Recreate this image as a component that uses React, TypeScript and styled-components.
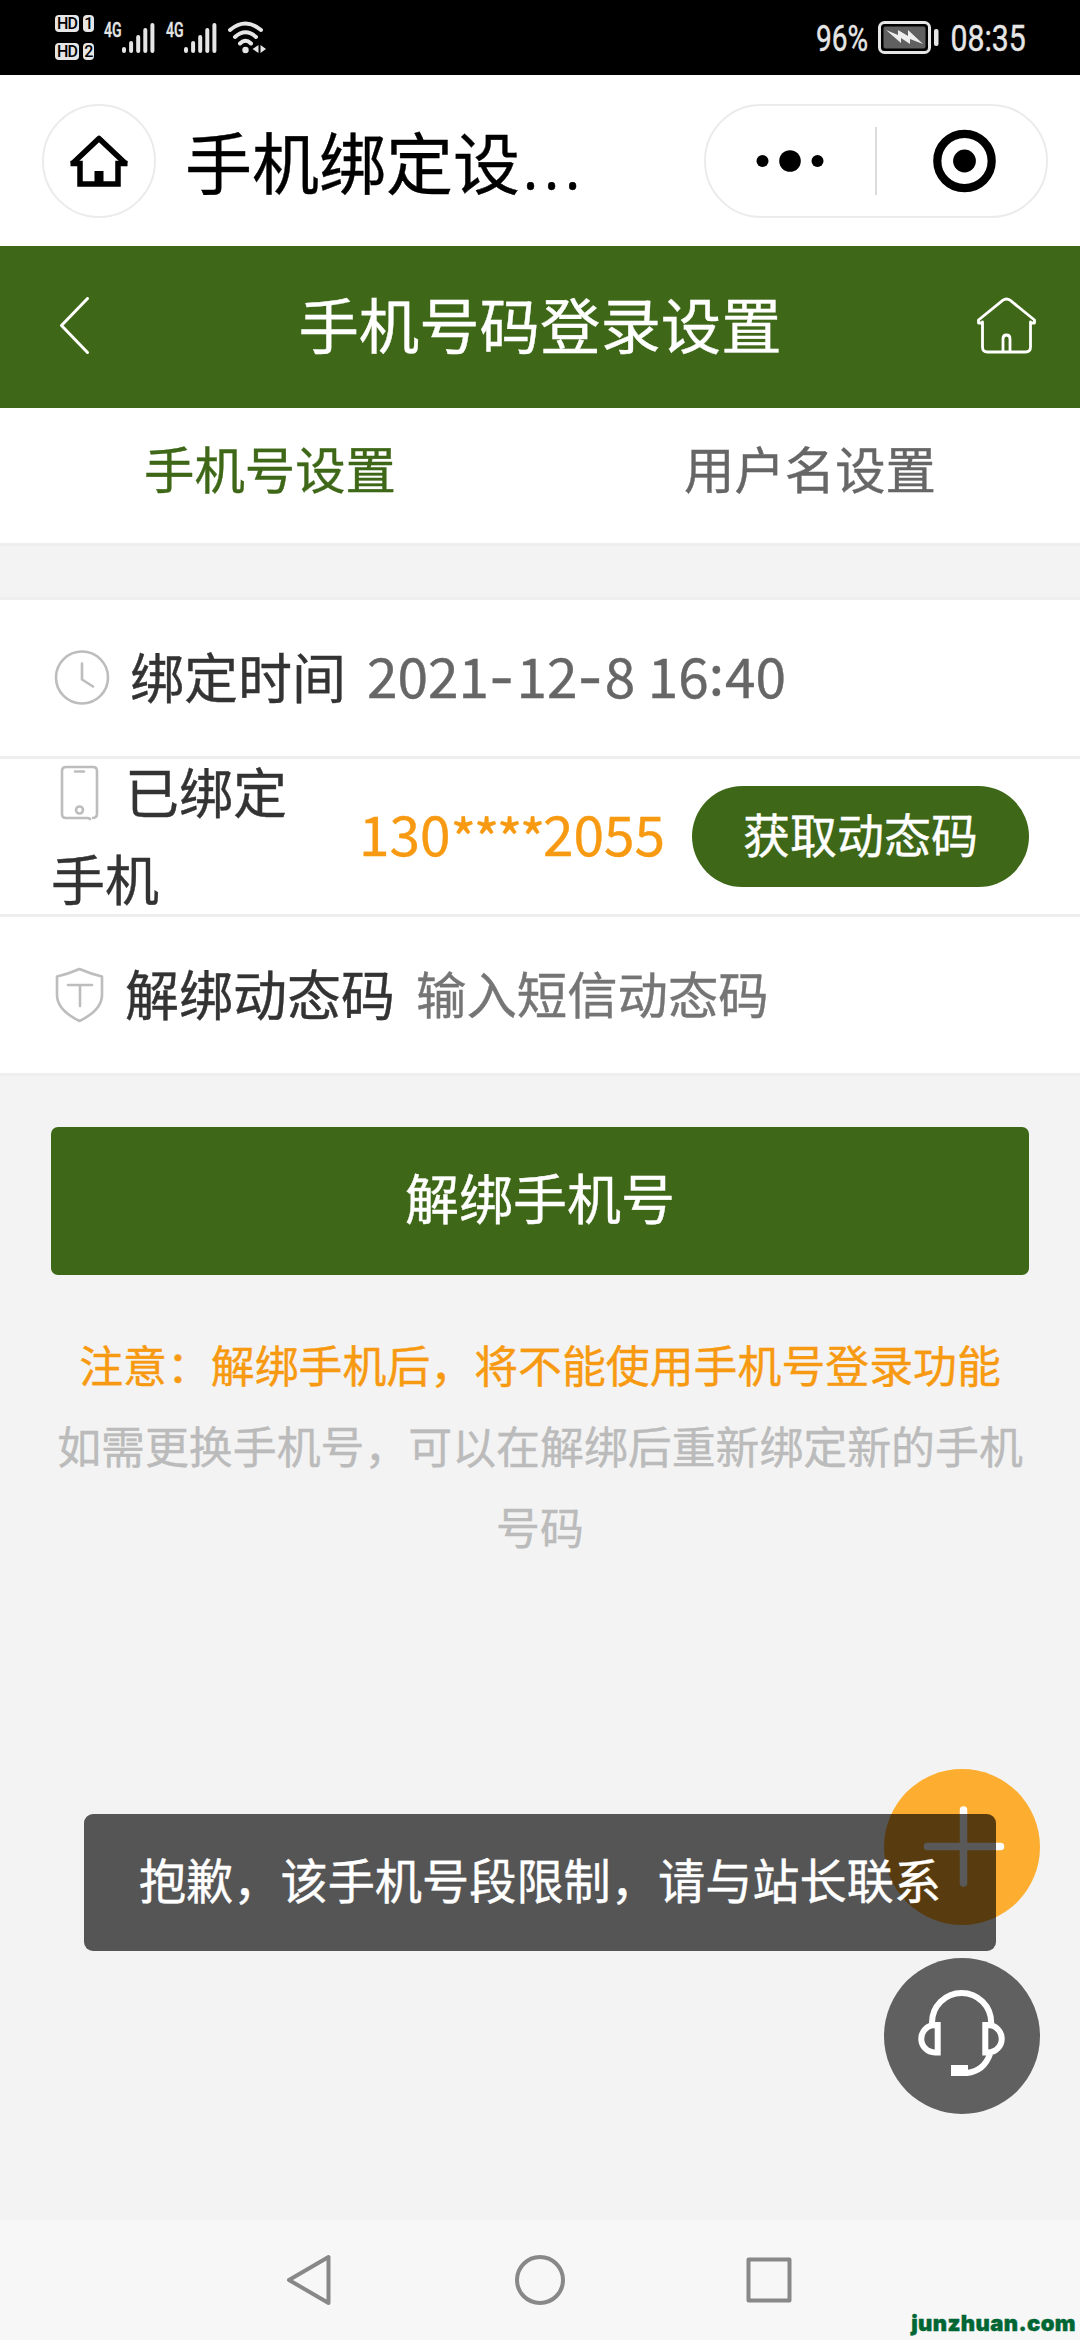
import React from "react";
import styled, { createGlobalStyle } from "styled-components";

const GREEN = "#3e6717";
const ORANGE = "#f79a11";

const GlobalStyle = createGlobalStyle`
  * { box-sizing: border-box; }
  body { margin: 0; background: #f3f3f3; }
  button, input { font-family: inherit; border: 0; padding: 0; background: none; }
`;

const Screen = styled.div`
  position: relative;
  width: 1080px;
  height: 2340px;
  overflow: hidden;
  display: flex;
  flex-direction: column;
  background: #f3f3f3;
  color: #333;
  font-family: "Noto Sans CJK SC", sans-serif;
  font-weight: 400;
  -webkit-text-stroke: 0.4px;
`;

const StatusBar = styled.header`
  height: 75px;
  flex: none;
  background: #000;
  color: #e6e6e6;
  display: flex;
  align-items: center;
  justify-content: space-between;
  padding: 0 53px 0 55px;
`;
const StatusLeft = styled.div`
  display: flex;
  align-items: center;
`;
const HdStack = styled.div`
  display: flex;
  flex-direction: column;
  gap: 11px;
  margin-right: 10px;
`;
const HdRow = styled.div`
  display: flex;
  gap: 4px;
`;
const HdTag = styled.span<{ $w: number }>`
  width: ${(p) => p.$w}px;
  height: 17px;
  border-radius: 4px;
  background: #e6e6e6;
  color: #000;
  display: flex;
  align-items: center;
  justify-content: center;
  font: 500 16px/17px Roboto, sans-serif;
  letter-spacing: -0.8px;
  -webkit-text-stroke: 0;
`;
const Signal = styled.div`
  display: flex;
  align-items: flex-start;
  height: 31px;
  margin-right: 11px;
`;
const NetLabel = styled.span`
  width: 18px;
  font: 500 21px/16px Roboto, sans-serif;
  transform: scaleX(0.67);
  transform-origin: left;
`;
const StatusRight = styled.div`
  display: flex;
  align-items: center;
`;
const StatusText = styled.span<{ $w: number }>`
  width: ${(p) => p.$w}px;
  white-space: nowrap;
  font: 400 36px/40px Roboto, sans-serif;
  margin-top: 3px;
`;
const Condensed = styled.span<{ $s: number }>`
  display: inline-block;
  transform: scaleX(${(p) => p.$s});
  transform-origin: left;
`;

const AppBar = styled.div`
  height: 171px;
  flex: none;
  background: #fff;
  display: flex;
  align-items: center;
  padding: 0 32px 0 42px;
  color: #000;
`;
const RoundButton = styled.button`
  width: 114px;
  height: 114px;
  border: 2px solid #ebebeb;
  border-radius: 50%;
  display: flex;
  align-items: center;
  justify-content: center;
`;
const AppTitle = styled.h1`
  margin: 0 0 2px 29px;
  flex: 1;
  font-size: 67px;
  line-height: 100px;
  font-weight: 400;
  white-space: nowrap;
`;
const Ellipsis = styled.span`
  font-family: "Open Sans", sans-serif;
  font-weight: 300;
  font-size: 88px;
  line-height: 0;
`;
const Capsule = styled.div`
  width: 344px;
  height: 114px;
  border: 2px solid #ebebeb;
  border-radius: 57px;
  display: flex;
  align-items: center;
`;
const CapsuleHalf = styled.div`
  flex: 1;
  display: flex;
  align-items: center;
  justify-content: center;
`;
const CapsuleDivider = styled.div`
  width: 2px;
  height: 68px;
  background: #dcdcdc;
`;

const PageHeader = styled.div`
  height: 162px;
  flex: none;
  background: ${GREEN};
  color: #fff;
  display: flex;
  align-items: center;
  justify-content: space-between;
  padding: 0 43px 0 58px;
`;
const PageTitle = styled.h2`
  margin: 0 0 8px -15px;
  font-size: 60.4px;
  line-height: 90px;
  font-weight: 400;
`;
const HeaderIcon = styled.button`
  width: 61px;
  height: 60px;
  color: #fff;
  display: flex;
`;

const Tabs = styled.nav`
  height: 138px;
  flex: none;
  background: #fff;
  border-bottom: 3px solid #eee;
  display: flex;
`;
const Tab = styled.button<{ $active?: boolean }>`
  flex: 1;
  padding-bottom: 16px;
  font-size: 50.4px;
  color: ${(p) => (p.$active ? GREEN : "#666")};
`;

const Form = styled.section`
  margin-top: 51px;
  border-top: 3px solid #eee;
  flex: none;
`;
const Row = styled.div`
  height: 158.5px;
  background: #fff;
  border-bottom: 3px solid #eee;
  display: flex;
  align-items: center;
  padding: 0 51px;
`;
const Label = styled.div<{ $w?: number }>`
  width: ${(p) => (p.$w ? `${p.$w}px` : "auto")};
  margin-bottom: 5px;
  font-size: 54px;
  line-height: 87px;
  color: #333;
  flex: none;
`;
const LabelIcon = styled.svg<{ $gap: number }>`
  width: 62px;
  height: 60px;
  vertical-align: -10px;
  margin-right: ${(p) => p.$gap}px;
  fill: none;
  stroke: #bdbdbd;
  stroke-width: 2.6;
  stroke-linecap: round;
  stroke-linejoin: round;
`;
const Value = styled.div<{ $ml: number; $color: string }>`
  margin-left: ${(p) => p.$ml}px;
  margin-bottom: 7px;
  color: ${(p) => p.$color};
  font-size: 55px;
  line-height: 87px;
  white-space: nowrap;
`;
const Dash = styled.span`
  font-family: Inter, sans-serif;
  line-height: 0;
  letter-spacing: 2px;
`;
const Colon = styled.span`
  vertical-align: 3px;
  line-height: 0;
  letter-spacing: 1px;
`;
const Mask = styled.span`
  letter-spacing: -2.6px;
  vertical-align: -4px;
  line-height: 0;
`;
const CodeButton = styled.button`
  width: 337px;
  height: 101px;
  margin-left: auto;
  padding-bottom: 7px;
  border-radius: 51px;
  background: ${GREEN};
  color: #fff;
  font-size: 47px;
  flex: none;
`;
const CodeInput = styled.input`
  margin: 0 0 5px 21px;
  width: 480px;
  height: 87px;
  font-size: 50.4px;
  &::placeholder { color: #757575; opacity: 1; }
`;

const Submit = styled.button`
  margin: 51px 51px 0;
  height: 148px;
  flex: none;
  border-radius: 7px;
  background: ${GREEN};
  color: #fff;
  font-size: 54px;
  padding-bottom: 8px;
`;
const Notes = styled.div`
  margin: 49px 50px 0;
  text-align: center;
  font-size: 43.9px;
  line-height: 81px;
  color: #bbb;
`;
const Warning = styled.p`
  margin: 0;
  color: ${ORANGE};
`;
const Hint = styled.p`
  margin: 0;
`;

const FloatingActions = styled.div`
  position: absolute;
  left: 884px;
  top: 1769px;
  display: flex;
  flex-direction: column;
  gap: 33px;
`;
const Fab = styled.button<{ $bg: string }>`
  width: 156px;
  height: 156px;
  border-radius: 50%;
  background: ${(p) => p.$bg};
`;
const Toast = styled.div`
  position: absolute;
  left: 84px;
  top: 1814px;
  width: 912px;
  height: 137px;
  border-radius: 9px;
  background: rgba(0, 0, 0, 0.65);
  color: #fff;
  font-size: 47.2px;
  line-height: 130px;
  text-align: center;
  white-space: nowrap;
`;

const SystemNav = styled.nav`
  margin-top: auto;
  height: 120px;
  flex: none;
  background: #f7f7f7;
  display: flex;
  align-items: center;
  justify-content: center;
  gap: 169px;
`;
const NavIcon = styled.svg`
  width: 60px;
  height: 60px;
  fill: none;
  stroke: #888;
  stroke-width: 4;
  stroke-linejoin: round;
`;
const Watermark = styled.span`
  position: absolute;
  right: 4px;
  bottom: 4px;
  font: 900 22px/26px Inter, sans-serif;
  letter-spacing: 0.4px;
  color: #063;
`;

function SignalBars() {
  return (
    <Signal>
      <NetLabel>4G</NetLabel>
      <svg width="33" height="31" viewBox="0 0 33 31" stroke="#e6e6e6" strokeWidth="4" strokeLinecap="round">
        <path d="M2 27v2M9.1 21v8M16.2 15v14M23.3 8v21M30.4 3v26" />
      </svg>
    </Signal>
  );
}

export default function App() {
  return (
    <>
      <GlobalStyle />
      <Screen>
        <StatusBar>
          <StatusLeft>
            <HdStack>
              <HdRow><HdTag $w={24}>HD</HdTag><HdTag $w={11}>1</HdTag></HdRow>
              <HdRow><HdTag $w={24}>HD</HdTag><HdTag $w={11}>2</HdTag></HdRow>
            </HdStack>
            <SignalBars />
            <SignalBars />
            <svg width="40" height="33" viewBox="0 0 40 33" fill="none" stroke="#e6e6e6" strokeWidth="4" strokeLinecap="round">
              <path d="M2 9Q17.500 -4 33 9M7 16Q17.500 6.500 28 16M12 22.500Q17.500 17 23 22.500" />
              <circle cx="17.500" cy="29" r="3.200" fill="#e6e6e6" stroke="none" />
              <path d="M30.500 24v8l-6-4zM32.500 24v8l5.500-4z" fill="#e6e6e6" stroke="none" />
            </svg>
          </StatusLeft>
          <StatusRight>
            <StatusText $w={62}><Condensed $s={0.78}>96%</Condensed></StatusText>
            <svg width="65" height="33" viewBox="0 0 65 33">
              <rect x="1.500" y="1.500" width="50" height="30" rx="5" fill="none" stroke="#e6e6e6" strokeWidth="3" />
              <rect x="5.500" y="5.500" width="42" height="22" rx="2" fill="#606060" />
              <path d="M8 9l12 5v-5l10 6v-6l15 14-13-5v5l-9-6v5z" fill="#eee" />
              <rect x="56" y="8" width="4.500" height="17" rx="2" fill="#e6e6e6" />
            </svg>
            <StatusText $w={84}><Condensed $s={0.84}>&nbsp;08:35</Condensed></StatusText>
          </StatusRight>
        </StatusBar>

        <AppBar>
          <RoundButton aria-label="home">
            <svg width="60" height="56" viewBox="0 0 60 56" fill="none" stroke="#000" strokeWidth="5.500">
              <path d="M3 31L30 5.500 57 31" strokeLinejoin="round" />
              <path d="M1.500 30.500h9.500V51h38V30.500h9.500" />
              <path d="M30 38v14" strokeWidth="9" />
            </svg>
          </RoundButton>
          <AppTitle>手机绑定设<Ellipsis>…</Ellipsis></AppTitle>
          <Capsule>
            <CapsuleHalf>
              <svg width="70" height="24" viewBox="0 0 70 24">
                <circle cx="6.500" cy="12" r="6" />
                <circle cx="34" cy="12" r="10.800" />
                <circle cx="61.500" cy="12" r="6" />
              </svg>
            </CapsuleHalf>
            <CapsuleDivider />
            <CapsuleHalf>
              <svg width="68" height="64" viewBox="0 0 68 64">
                <circle cx="36.500" cy="32" r="27.200" fill="none" stroke="#000" strokeWidth="8.200" />
                <circle cx="36.500" cy="32" r="11.400" />
              </svg>
            </CapsuleHalf>
          </Capsule>
        </AppBar>

        <PageHeader>
          <HeaderIcon aria-label="back">
            <svg width="61" height="60" viewBox="0 0 61 60" fill="none" stroke="#fff" strokeWidth="3" strokeLinecap="round" strokeLinejoin="round">
              <path d="M29.500 1.500L3.500 28.500l26 27" />
            </svg>
          </HeaderIcon>
          <PageTitle>手机号码登录设置</PageTitle>
          <HeaderIcon aria-label="home">
            <svg width="61" height="60" viewBox="0 0 61 60" fill="none" stroke="#fff" strokeWidth="2.800" strokeLinecap="round" strokeLinejoin="round">
              <path d="M5.500 26H2.500v-3L27 3.200q3.500-2.500 7 0L58.500 23v3h-3M6.500 25v25q0 5 5 5h38q5 0 5-5V25M27 55V42q0-4 3.500-4t3.500 4v13" />
            </svg>
          </HeaderIcon>
        </PageHeader>

        <Tabs>
          <Tab $active>手机号设置</Tab>
          <Tab>用户名设置</Tab>
        </Tabs>

        <Form>
          <Row>
            <Label>
              <LabelIcon $gap={17} viewBox="0 0 62 60">
                <circle cx="31" cy="28.500" r="26" />
                <path d="M31 14.500v16l11 7" />
              </LabelIcon>
              绑定时间
            </Label>
            <Value $ml={21} $color="#666">
              2021<Dash>-</Dash>12<Dash>-</Dash>8 16<Colon>:</Colon>40
            </Value>
          </Row>
          <Row>
            <Label $w={256}>
              <LabelIcon $gap={12} viewBox="0 0 62 60">
                <path d="M36 54H15q-4 0-4-4V7q0-4 4-4h27q4 0 4 4v43q0 3.500-4 4M36 54q2 0 3 1M24 7.500h9" />
                <circle cx="28.500" cy="46" r="3.500" />
              </LabelIcon>
              已绑定手机
            </Label>
            <Value $ml={52} $color={ORANGE}>130<Mask>****</Mask>2055</Value>
            <CodeButton>获取动态码</CodeButton>
          </Row>
          <Row>
            <Label>
              <LabelIcon $gap={12} viewBox="0 0 62 60">
                <path d="M28.500 3Q17 8 6 10.500V29q0 15 22.500 26Q51 44 51 29V10.500Q40 8 28.500 3zM17 19h24M29 19v21" />
              </LabelIcon>
              解绑动态码
            </Label>
            <CodeInput placeholder="输入短信动态码" />
          </Row>
        </Form>

        <Submit>解绑手机号</Submit>

        <Notes>
          <Warning>注意：解绑手机后，将不能使用手机号登录功能</Warning>
          <Hint>如需更换手机号，可以在解绑后重新绑定新的手机号码</Hint>
        </Notes>

        <FloatingActions>
          <Fab $bg="#fdad2f" aria-label="add">
            <svg width="156" height="156" viewBox="0 0 156 156" stroke="#fff" strokeWidth="7.500" strokeLinecap="round">
              <path d="M79.500 41v73M43.500 77.500h73" />
            </svg>
          </Fab>
          <Fab $bg="#606060" aria-label="service">
            <svg width="156" height="156" viewBox="0 0 156 156" fill="none" stroke="#fff" strokeWidth="6">
              <path d="M48 66V64.500a29.600 29.600 0 0 1 59.200 0V66" />
              <path d="M53.700 67V94.500H51a13.700 13.700 0 0 1 0-27.500zM101.300 67v27.500h2.700a13.700 13.700 0 0 0 0-27.500z" />
              <path d="M106 96Q100 113 83 115" />
              <path d="M67 107h17v11H67z" fill="#fff" stroke="none" />
            </svg>
          </Fab>
        </FloatingActions>
        <Toast>抱歉，该手机号段限制，请与站长联系</Toast>

        <SystemNav>
          <NavIcon viewBox="0 0 60 60"><path d="M47.500 7v46L8 30z" /></NavIcon>
          <NavIcon viewBox="0 0 60 60"><circle cx="30" cy="30" r="23" /></NavIcon>
          <NavIcon viewBox="0 0 60 60"><rect x="9.500" y="9.500" width="41" height="41" /></NavIcon>
        </SystemNav>
        <Watermark>junzhuan.com</Watermark>
      </Screen>
    </>
  );
}
